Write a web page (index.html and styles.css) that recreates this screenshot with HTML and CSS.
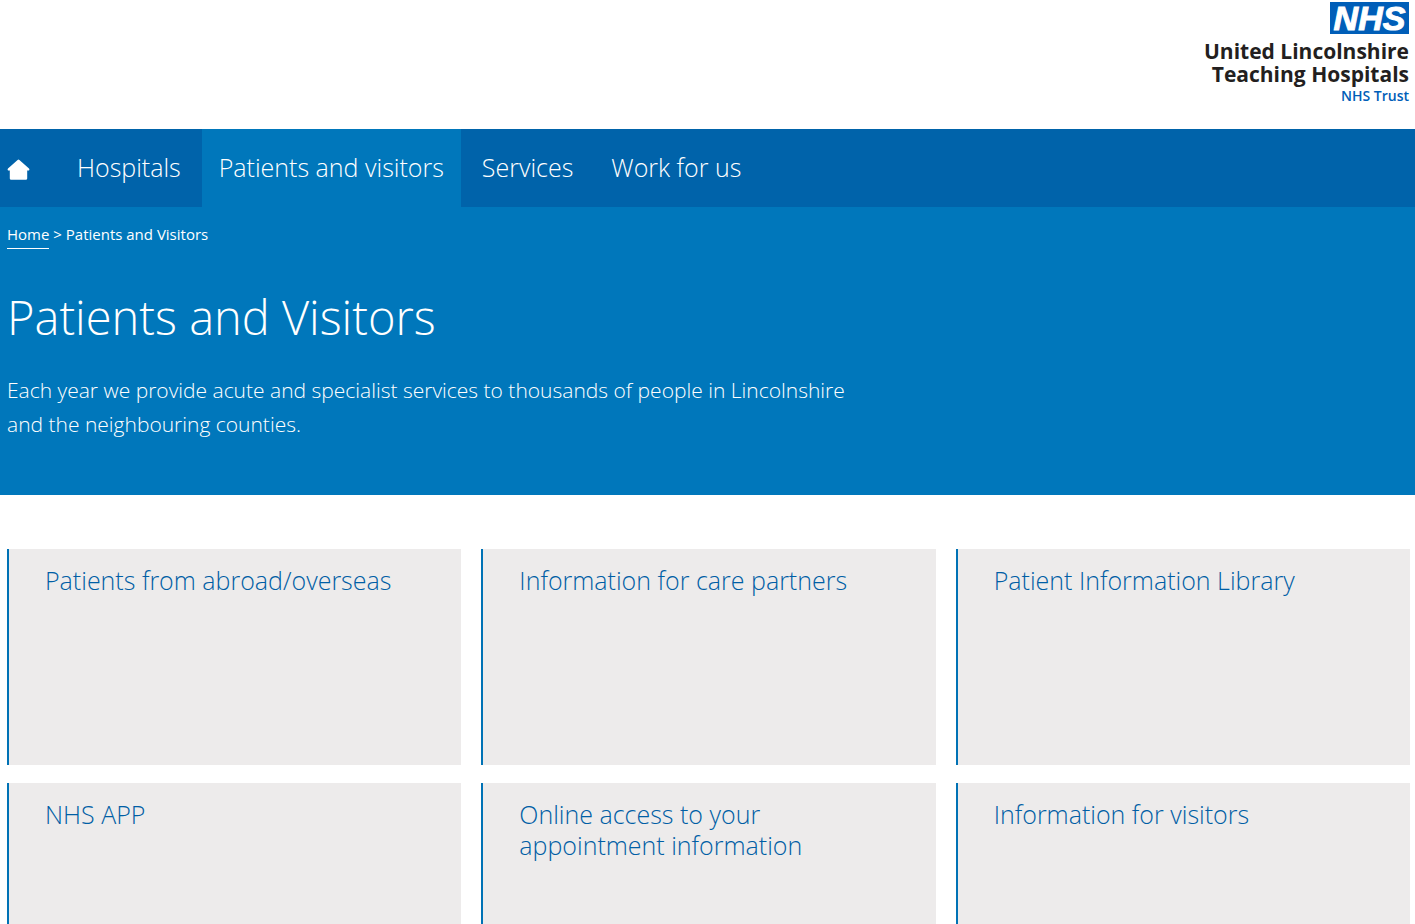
FILE: index.html
```html
<!DOCTYPE html>
<html lang="en">
  <head>
    <meta charset="UTF-8" />
    <meta name="viewport" content="width=device-width, initial-scale=1.0" />
    <title>Patients and Visitors - United Lincolnshire Teaching Hospitals</title>
    <link rel="stylesheet" href="styles.css">
  </head>
  <body>
    <header class="siteHeader">
      <a class="logo" href="#">
        <span class="logoBox">NHS</span>
        <span class="logoName">United Lincolnshire<br />Teaching Hospitals</span>
        <span class="logoTrust">NHS Trust</span>
      </a>
    </header>

    <nav class="mainNav" aria-label="Main">
      <ul>
        <li class="home">
          <a href="#" aria-label="Home">
            <svg width="24" height="22" viewBox="0 0 24 22" aria-hidden="true">
              <path
                d="M10.6 0.9 Q11.5 0.2 12.4 0.9 L22 9.6 Q22.9 10.6 22 11.5 H20.2 V19.4 Q20.2 20.8 18.8 20.8 H4.2 Q2.8 20.8 2.8 19.4 V11.5 H1 Q0.1 10.6 1 9.6 Z"
                fill="#fff"
              />
            </svg>
          </a>
        </li>
        <li><a href="#">Hospitals</a></li>
        <li class="active"><a href="#">Patients and visitors</a></li>
        <li><a href="#">Services</a></li>
        <li><a href="#">Work for us</a></li>
      </ul>
    </nav>

    <section class="banner">
      <p class="breadcrumb"><a href="#">Home</a> &gt; Patients and Visitors</p>
      <h1>Patients and Visitors</h1>
      <p class="intro">
        Each year we provide acute and specialist services to thousands of
        people in Lincolnshire and the neighbouring counties.
      </p>
    </section>

    <main class="cards">
      <a class="card" href="#"><h2>Patients from abroad/overseas</h2></a>
      <a class="card" href="#"><h2>Information for care partners</h2></a>
      <a class="card" href="#"><h2>Patient Information Library</h2></a>
      <a class="card" href="#"><h2>NHS APP</h2></a>
      <a class="card" href="#"><h2>Online access to your appointment information</h2></a>
      <a class="card" href="#"><h2>Information for visitors</h2></a>
    </main>
  </body>
</html>
```

FILE: styles.css
```css
* {
  margin: 0;
  padding: 0;
  box-sizing: border-box;
}
body {
  font-family: 'Open Sans', 'Noto Sans', sans-serif;
  font-weight: 300;
  color: #fff;
  background-color: #fff;
}
a {
  color: inherit;
  text-decoration: none;
}

/* header */
.siteHeader {
  display: flex;
  justify-content: flex-end;
  height: 129px;
  padding: 2px 6px 0 0;
}
.logo {
  display: flex;
  flex-direction: column;
  align-items: flex-end;
}
.logoBox {
  width: 79px;
  height: 32px;
  margin-bottom: 6px;
  font-family: 'Liberation Sans', Arial, sans-serif;
  font-size: 34px;
  font-weight: 700;
  font-style: italic;
  line-height: 33px;
  text-align: center;
  -webkit-text-stroke: 1px #fff;
  background-color: #005eb8;
}
.logoName {
  font-size: 21px;
  font-weight: 700;
  line-height: 23px;
  text-align: right;
  color: #231f20;
}
.logoTrust {
  font-size: 14px;
  font-weight: 600;
  line-height: 20px;
  color: #005eb8;
}

/* navigation */
.mainNav {
  background-color: #0063aa;
}
.mainNav ul {
  display: flex;
  list-style: none;
}
.mainNav a {
  display: flex;
  align-items: center;
  height: 78px;
  padding: 0 17px 2px;
  font-size: 25px;
}
.mainNav li {
  margin-right: 4px;
}
.mainNav .home {
  margin-right: 29px;
}
.mainNav .home a {
  padding: 4px 0 0 7px;
}
.mainNav .active {
  background-color: #0077bb;
}

/* banner */
.banner {
  padding: 15px 7px 54px;
  background-color: #0077bb;
}
.breadcrumb {
  font-size: 15px;
  font-weight: 400;
  line-height: 24px;
}
.breadcrumb a {
  padding-bottom: 4px;
  border-bottom: 1px solid #fff;
}
h1 {
  margin-top: 41px;
  font-size: 47px;
  font-weight: 300;
  line-height: 60px;
}
.intro {
  max-width: 860px;
  margin-top: 26px;
  font-size: 21px;
  line-height: 34px;
}

/* cards */
.cards {
  display: grid;
  grid-template-columns: repeat(3, 1fr);
  gap: 18px 20px;
  padding: 54px 5px 54px 7px;
}
.card {
  min-height: 216px;
  padding: 16px 36px;
  color: #005ea5;
  background-color: #edebeb;
  border-left: 2px solid #0072b5;
}
h2 {
  font-size: 25px;
  font-weight: 300;
  line-height: 31px;
}
```
